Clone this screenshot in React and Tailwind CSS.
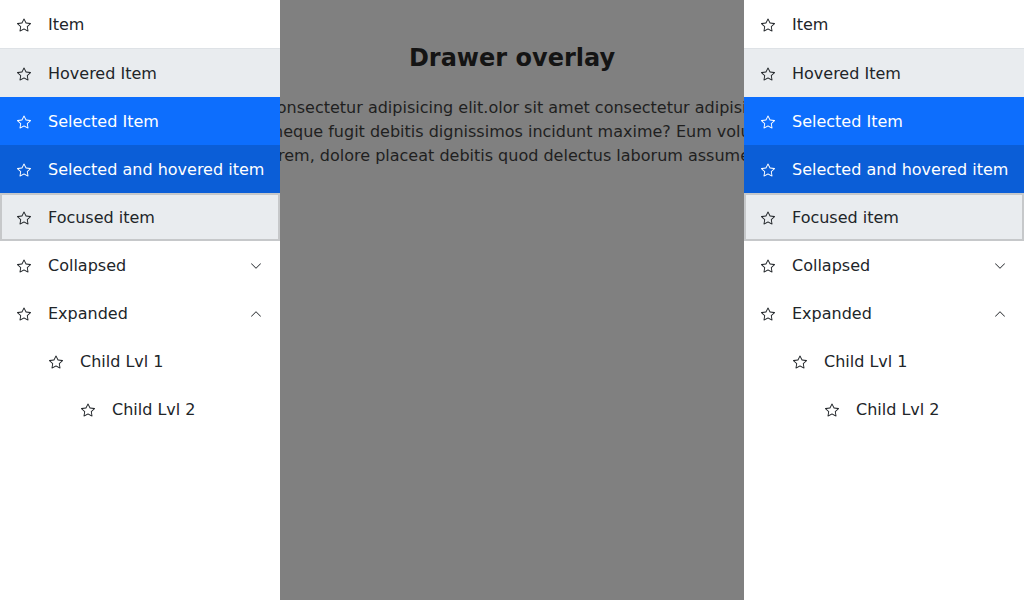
import React from 'react'

const font = { fontFamily: '"DejaVu Sans", sans-serif' }

function StarIcon({ className = '' }) {
  return (
    <svg viewBox="0 0 16 16" width="14" height="14" fill="currentColor" className={className}>
      <path d="M2.866 14.85c-.078.444.36.791.746.593l4.39-2.256 4.389 2.256c.386.198.824-.149.746-.592l-.83-4.73 3.522-3.356c.33-.314.16-.888-.282-.95l-4.898-.696L8.465.792a.513.513 0 0 0-.927 0L5.354 5.12l-4.898.696c-.441.062-.612.636-.283.95l3.523 3.356-.83 4.73zm4.905-2.767-3.686 1.894.694-3.957a.565.565 0 0 0-.163-.505L1.71 6.745l4.052-.576a.525.525 0 0 0 .393-.288L8 2.223l1.847 3.658a.525.525 0 0 0 .393.288l4.052.575-2.906 2.77a.565.565 0 0 0-.163.506l.694 3.957-3.686-1.894a.503.503 0 0 0-.461 0z" />
    </svg>
  )
}

function Chevron({ up }) {
  return (
    <svg viewBox="0 0 16 16" width="12" height="12" fill="currentColor" className={up ? 'rotate-180' : ''}>
      <path fillRule="evenodd" d="M1.646 4.646a.5.5 0 0 1 .708 0L8 10.293l5.646-5.647a.5.5 0 0 1 .708.708l-6 6a.5.5 0 0 1-.708 0l-6-6a.5.5 0 0 1 0-.708z" />
    </svg>
  )
}

// each row: label, state, indent level, chevron
const rows = [
  { label: 'Item', cls: 'bg-white text-[#212529] border-b border-[#dee2e6] h-[49px]' },
  { label: 'Hovered Item', cls: 'bg-[#e9ecef] text-[#212529]' },
  { label: 'Selected Item', cls: 'bg-[#0d6efd] text-white' },
  { label: 'Selected and hovered item', cls: 'bg-[#0b5ed7] text-white' },
  { label: 'Focused item', cls: 'bg-[#e9ecef] text-[#212529] border-2 border-[#c6c8ca] pl-[14px]' },
  { label: 'Collapsed', cls: 'bg-white text-[#212529]', chevron: 'down' },
  { label: 'Expanded', cls: 'bg-white text-[#212529]', chevron: 'up' },
  { label: 'Child Lvl 1', cls: 'bg-white text-[#212529] pl-12' },
  { label: 'Child Lvl 2', cls: 'bg-white text-[#212529] pl-20' },
]

function Drawer() {
  return (
    <div className="w-[280px] shrink-0 h-full bg-white flex flex-col">
      {rows.map((r) => (
        <div
          key={r.label}
          className={`h-12 flex items-center pl-4 pr-[18px] pt-[2px] text-base ${r.cls}`}
        >
          <StarIcon className="mr-[17px] ml-[1px] shrink-0" />
          <span className="flex-1 whitespace-nowrap">{r.label}</span>
          {r.chevron && <Chevron up={r.chevron === 'up'} />}
        </div>
      ))}
    </div>
  )
}

export default function App() {
  return (
    <div className="w-[1024px] h-[600px] flex bg-[#808080] overflow-hidden" style={font}>
      <Drawer />
      <div className="flex-1 min-w-0 overflow-hidden text-[#1f1f1f]">
        <h2 className="mt-[44px] text-2xl font-bold leading-7 text-center text-[#141414]">Drawer overlay</h2>
        <div className="mt-[24px] text-base leading-6 whitespace-nowrap">
          <div className="-ml-[12px]">consectetur adipisicing elit.olor sit amet consectetur adipisicing elit.</div>
          <div className="-ml-[7px]">neque fugit debitis dignissimos incidunt maxime? Eum voluptatum</div>
          <div className="-ml-[2px]">rem, dolore placeat debitis quod delectus laborum assumenda.</div>
        </div>
      </div>
      <Drawer />
    </div>
  )
}
